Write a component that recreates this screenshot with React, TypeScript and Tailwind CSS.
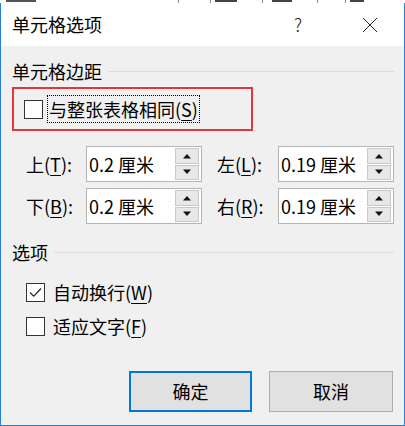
import React from 'react';

const FONT = '"Noto Sans CJK SC", "Noto Sans", sans-serif';

function Mn({ children }: { children: React.ReactNode }) {
  return <span className="underline decoration-1 underline-offset-[3px]">{children}</span>;
}

function CheckBox({ checked }: { checked?: boolean }) {
  return (
    <span className="flex h-[19px] w-[19px] shrink-0 items-center justify-center border border-[#333333] bg-white">
      {checked ? (
        <svg width="15" height="15" viewBox="0 0 15 15" fill="none">
          <path d="M2 7.5 L5.8 11.2 L13 3.5" stroke="#222" strokeWidth="1.2" />
        </svg>
      ) : null}
    </span>
  );
}

function SectionLabel({ label }: { label: string }) {
  return (
    <div className="flex h-6 items-center gap-[6px] pr-[10px]">
      <span className="leading-6">{label}</span>
      <span className="h-px flex-1 bg-[#dcdcdc]" />
    </div>
  );
}

function Spinner({ value }: { value: string }) {
  return (
    <div className="flex h-[36px] w-[116px] items-center justify-between border border-[#b4b4b4] bg-white pl-[2px] pr-[2px]">
      <span className="leading-none">{value}</span>
      <div className="flex h-[32px] w-[24px] flex-col gap-px">
        <div className="flex flex-1 items-center justify-center border border-[#c8c8c8] bg-[#e8e8e8]">
          <svg width="10" height="6" viewBox="0 0 10 6">
            <path d="M1 5.5 L5 1 L9 5.5 Z" fill="#111" />
          </svg>
        </div>
        <div className="flex flex-1 items-center justify-center border border-[#c8c8c8] bg-[#e8e8e8]">
          <svg width="10" height="6" viewBox="0 0 10 6">
            <path d="M1 0.5 L5 5 L9 0.5 Z" fill="#111" />
          </svg>
        </div>
      </div>
    </div>
  );
}

function MarginRow({
  leftLabel,
  leftKey,
  leftValue,
  rightLabel,
  rightKey,
  rightValue,
}: {
  leftLabel: string;
  leftKey: string;
  leftValue: string;
  rightLabel: string;
  rightKey: string;
  rightValue: string;
}) {
  return (
    <div className="flex items-center pl-[25px]">
      <span className="w-[60px]">
        {leftLabel}(<Mn>{leftKey}</Mn>):
      </span>
      <Spinner value={leftValue} />
      <span className="ml-[15px] w-[61px]">
        {rightLabel}(<Mn>{rightKey}</Mn>):
      </span>
      <Spinner value={rightValue} />
    </div>
  );
}

export default function App() {
  return (
    <div className="flex h-[426px] w-[405px] flex-col bg-white text-[18px] text-black" style={{ fontFamily: FONT }}>
      {/* edge of the window behind */}
      <div className="relative h-[3px] bg-white">
        <span className="absolute left-[6px] top-0 h-[2px] w-[30px] bg-[#555]" />
        <span className="absolute left-[178px] top-0 h-[3px] w-px bg-[#888]" />
        <span className="absolute left-[210px] top-0 h-[3px] w-px bg-[#888]" />
        <span className="absolute left-[215px] top-0 h-[2px] w-[22px] bg-[#444]" />
        <span className="absolute left-[262px] top-0 h-[3px] w-px bg-[#888]" />
        <span className="absolute left-[272px] top-0 h-[2px] w-[20px] bg-[#444]" />
        <span className="absolute left-[317px] top-0 h-[3px] w-px bg-[#888]" />
        <span className="absolute left-[345px] top-0 h-[3px] w-px bg-[#888]" />
        <span className="absolute left-[350px] top-0 h-[2px] w-[14px] bg-[#444]" />
      </div>

      <div className="flex flex-1 flex-col border-x border-b border-[#2b7fd8]">
        <div className="flex h-[43px] items-center bg-white pl-[11px]">
          <span className="flex-1">单元格选项</span>
          <span className="mr-[60px] text-[18px] font-light text-[#222]">?</span>
          <svg className="mr-[26px]" width="16" height="16" viewBox="0 0 16 16">
            <path d="M1 1 L15 15 M15 1 L1 15" stroke="#222" strokeWidth="1" />
          </svg>
        </div>

        <div className="flex flex-1 flex-col bg-[#f0f0f0] pl-[11px] pt-[13px]">
          <SectionLabel label="单元格边距" />

          <div className="mt-[4px] flex h-[44px] w-[241px] items-center border-2 border-[#e2383c] pl-[10px]">
            <CheckBox />
            <span className="ml-[4px] flex h-[28px] items-center border border-dotted border-black px-px">
              与整张表格相同(<Mn>S</Mn>)
            </span>
          </div>

          <div className="-ml-[11px] mt-[15px] flex flex-col gap-[6px]">
            <MarginRow
              leftLabel="上"
              leftKey="T"
              leftValue="0.2 厘米"
              rightLabel="左"
              rightKey="L"
              rightValue="0.19 厘米"
            />
            <MarginRow
              leftLabel="下"
              leftKey="B"
              leftValue="0.2 厘米"
              rightLabel="右"
              rightKey="R"
              rightValue="0.19 厘米"
            />
          </div>

          <div className="mt-[16px]">
            <SectionLabel label="选项" />
          </div>

          <div className="mt-[16px] flex h-6 items-center gap-[8px] pl-[14px]">
            <CheckBox checked />
            <span>
              自动换行(<Mn>W</Mn>)
            </span>
          </div>
          <div className="mt-[10px] flex h-6 items-center gap-[8px] pl-[14px]">
            <CheckBox />
            <span>
              适应文字(<Mn>F</Mn>)
            </span>
          </div>

          <div className="mt-[33px] flex gap-[17px] pl-[117px]">
            <button className="flex h-[41px] w-[123px] items-center justify-center border-2 border-[#0078d7] bg-[#e1e1e1]">
              确定
            </button>
            <button className="flex h-[41px] w-[124px] items-center justify-center border border-[#adadad] bg-[#e1e1e1]">
              取消
            </button>
          </div>
        </div>
      </div>
    </div>
  );
}
